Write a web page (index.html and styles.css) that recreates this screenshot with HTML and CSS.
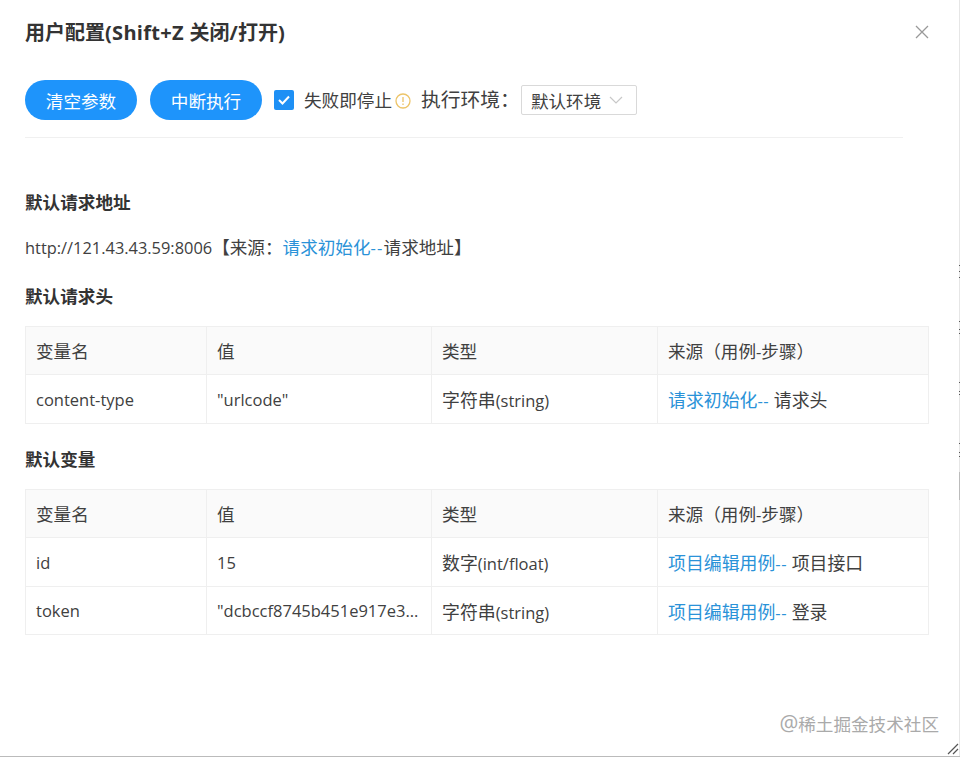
FILE: index.html
```html
<!DOCTYPE html>
<html lang="zh-CN">

<head>
    <meta charset="UTF-8">
    <title>用户配置</title>
    <link rel="stylesheet" href="styles.css">
</head>

<body>
    <div class="modal">
        <div class="modal-head">
            <h2 class="modal-title">用户配置<span class="en">(Shift+Z </span>关闭<span class="en">/</span>打开<span class="en">)</span></h2>
            <svg class="close" width="14" height="14" viewBox="0 0 14 14"><path d="M1 1l12 12M13 1L1 13" /></svg>
        </div>

        <div class="toolbar">
            <button class="btn">清空参数</button>
            <button class="btn">中断执行</button>
            <span class="check">
                <svg width="14" height="12" viewBox="0 0 14 12"><path d="M2 6l3.5 3.5L12 2.5" /></svg>
            </span>
            <span class="check-label">失败即停止</span>
            <svg class="tip" width="16" height="16" viewBox="0 0 16 16">
                <circle cx="8" cy="8" r="7" />
                <path d="M8 4v5M8 10.5v1.5" />
            </svg>
            <span class="env-label">执行环境：</span>
            <div class="select">
                默认环境
                <svg width="14" height="8" viewBox="0 0 14 8"><path d="M1 1l6 6 6-6" /></svg>
            </div>
        </div>

        <h3 class="sec-title first">默认请求地址</h3>
        <p class="url"><span class="en">http://121.43.43.59:8006</span>【来源：<a class="link">请求初始化<span class="en">--</span></a>请求地址】</p>

        <h3 class="sec-title">默认请求头</h3>
        <table class="tb">
            <thead>
                <tr>
                    <th class="c1">变量名</th>
                    <th class="c2">值</th>
                    <th class="c3">类型</th>
                    <th>来源（用例<span class="en">-</span>步骤）</th>
                </tr>
            </thead>
            <tbody>
                <tr>
                    <td class="en">content-type</td>
                    <td class="en">"urlcode"</td>
                    <td>字符串<span class="en">(string)</span></td>
                    <td><a class="link">请求初始化<span class="en">--</span></a> 请求头</td>
                </tr>
            </tbody>
        </table>

        <h3 class="sec-title second">默认变量</h3>
        <table class="tb">
            <thead>
                <tr>
                    <th class="c1">变量名</th>
                    <th class="c2">值</th>
                    <th class="c3">类型</th>
                    <th>来源（用例<span class="en">-</span>步骤）</th>
                </tr>
            </thead>
            <tbody>
                <tr>
                    <td class="en">id</td>
                    <td class="en">15</td>
                    <td>数字<span class="en">(int/float)</span></td>
                    <td><a class="link">项目编辑用例<span class="en">--</span></a> 项目接口</td>
                </tr>
                <tr>
                    <td class="en">token</td>
                    <td class="en">"dcbccf8745b451e917e3...</td>
                    <td>字符串<span class="en">(string)</span></td>
                    <td><a class="link">项目编辑用例<span class="en">--</span></a> 登录</td>
                </tr>
            </tbody>
        </table>

        <span class="mark"><span class="at">@</span>稀土掘金技术社区</span>
        <svg class="grip" width="12" height="12" viewBox="0 0 12 12"><path d="M1 11L11 1M6 11l5-5" /></svg>
        <!-- bits of the page behind, showing at the window edge -->
        <svg class="edge" width="1" height="757" viewBox="0 0 1 757">
            <path class="edge-dots" d="M.5 265v1M.5 271v1M.5 277v1M.5 321v1M.5 329v1M.5 333v1M.5 382v1M.5 391v1M.5 394v1M.5 443v1M.5 452v1M.5 456v1" />
            <path class="edge-bar" d="M.5 472v28" />
        </svg>
    </div>
</body>

</html>
```
FILE: styles.css
```css
* {
    box-sizing: border-box;
}

html,
body {
    margin: 0;
    height: 100%;
    background: #fff;
}

body {
    font-family: "Open Sans", "Noto Sans CJK SC", sans-serif;
    font-size: 17.6px;
    color: #404040;
}

.en {
    font-size: 16.5px;
}

.modal {
    position: relative;
    height: 757px;
    padding: 0 32px 0 25px;
    border-bottom: 1px solid #bbb;
    box-shadow: inset -1px 0 0 #e6e6e6;
    overflow: hidden;
}

.modal-head {
    height: 80px;
    padding-top: 20px;
    display: flex;
    justify-content: space-between;
}

.modal-title {
    margin: 0;
    font-size: 20px;
    line-height: 26px;
    font-weight: 700;
    color: #333;
}

.modal-title .en {
    font-size: 20px;
    letter-spacing: .3px;
}

.close {
    margin: 5px -1px 0 0;
}

.close path {
    fill: none;
    stroke: #999;
    stroke-width: 1.3;
}

.toolbar {
    width: 878px;
    height: 58px;
    display: flex;
    align-items: flex-start;
    border-bottom: 1px solid #f0f0f0;
}

.btn {
    width: 112px;
    height: 40px;
    margin-right: 13px;
    border: 0;
    border-radius: 20px;
    background: #1e94fb;
    color: #fff;
    font: inherit;
}

.check {
    width: 20px;
    height: 20px;
    margin: 10px 10px 0 -1px;
    display: flex;
    align-items: center;
    justify-content: center;
    border-radius: 2px;
    background: #1e90f5;
}

.check path {
    fill: none;
    stroke: #fff;
    stroke-width: 2;
}

.check-label,
.env-label {
    line-height: 40px;
}

.tip {
    margin: 13px 0 0 3px;
}

.tip circle,
.tip path {
    fill: none;
    stroke: #edc468;
    stroke-width: 1.3;
}

.env-label {
    margin-left: 10px;
    font-size: 19.8px;
}

.select {
    width: 116px;
    height: 30px;
    margin: 5px 0 0 1px;
    padding-left: 9px;
    display: flex;
    align-items: center;
    gap: 8px;
    border: 1px solid #d9d9d9;
    border-radius: 2px;
}

.select path {
    fill: none;
    stroke: #c8c8c8;
    stroke-width: 1.2;
}

.sec-title {
    margin: 0;
    font-size: 17.6px;
    line-height: 24px;
    font-weight: 700;
    color: #333;
}

.sec-title.first {
    margin-top: 52px;
}

.sec-title.second {
    margin-top: 23px;
}

.url {
    margin: 21px 0 24px;
    line-height: 24px;
}

.url > .en {
    font-size: 16.4px;
}

.link {
    color: #2a92d8;
}

.link .en {
    letter-spacing: .5px;
}

.url .link .en {
    letter-spacing: 1.2px;
}

.tb {
    width: 904px;
    margin-top: 18px;
    table-layout: fixed;
    border-collapse: collapse;
}

.tb th,
.tb td {
    height: 49px;
    padding: 0 10px;
    border: 1px solid #efefef;
    font-weight: 400;
    text-align: left;
    white-space: nowrap;
    overflow: hidden;
}

.tb tr + tr td {
    height: 48px;
}

.tb td {
    font-size: 17.9px;
}

.tb td.en {
    font-size: 16.5px;
}

.tb th {
    height: 48px;
    background: #fafafa;
}

.c1 {
    width: 181px;
}

.c2 {
    width: 225px;
}

.c3 {
    width: 226px;
}

.mark {
    position: absolute;
    right: 21px;
    bottom: 19px;
    color: #aaa;
}

.at {
    font-size: 21px;
}

.grip {
    position: absolute;
    right: 1px;
    bottom: 1px;
}

.grip path {
    fill: none;
    stroke: #555;
    stroke-width: 1.2;
}

.edge {
    position: absolute;
    top: 0;
    right: 0;
}

.edge path {
    fill: none;
    stroke-width: 1;
}

.edge-dots {
    stroke: #555;
}

.edge-bar {
    stroke: #bbb;
}
```
